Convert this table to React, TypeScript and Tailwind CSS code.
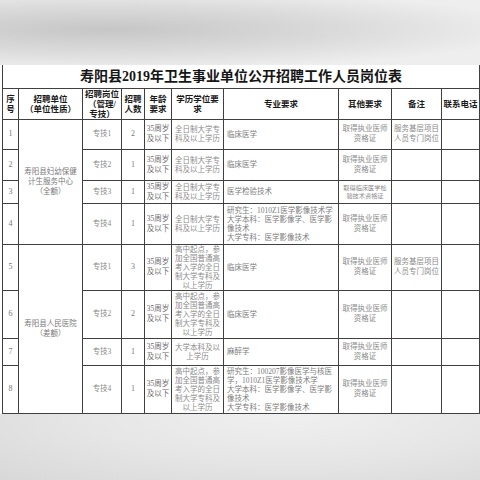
const FONT = "font-['Liberation_Serif','Noto_Sans_CJK_SC',serif]";

type Row = {
  no: string;
  post: string;
  num: string;
  edu: string[];
  major: string[];
  other: string[];
  otherSmall?: boolean;
  note: string[];
  h: string;
};

const EDU_LONG = ['高中起点，参', '加全国普通高', '考入学的全日', '制大学专科及', '以上学历'];
const EDU_SHORT = ['全日制大学专', '科及以上学历'];
const LICENSE = ['取得执业医师', '资格证'];
const NOTE = ['服务基层项目', '人员专门岗位'];

const ROWS: Row[] = [
  { no: '1', post: '专技1', num: '2', edu: EDU_SHORT, major: ['临床医学'], other: LICENSE, note: NOTE, h: 'h-[30px]' },
  { no: '2', post: '专技2', num: '1', edu: EDU_SHORT, major: ['临床医学'], other: LICENSE, note: [], h: 'h-[31px]' },
  { no: '3', post: '专技3', num: '1', edu: EDU_SHORT, major: ['医学检验技术'], other: ['取得临床医学检', '验技术资格证'], otherSmall: true, note: [], h: 'h-[23px]' },
  {
    no: '4', post: '专技4', num: '1', edu: EDU_SHORT,
    major: ['研究生：1010Z1医学影像技术学', '大学本科：医学影像学、医学影', '像技术', '大学专科：医学影像技术'],
    other: LICENSE, note: [], h: 'h-[41px]',
  },
  { no: '5', post: '专技1', num: '3', edu: EDU_LONG, major: ['临床医学'], other: LICENSE, note: NOTE, h: 'h-[46px]' },
  { no: '6', post: '专技2', num: '2', edu: EDU_LONG, major: ['临床医学'], other: LICENSE, note: [], h: 'h-[48px]' },
  { no: '7', post: '专技3', num: '1', edu: ['大学本科及以', '上学历'], major: ['麻醉学'], other: LICENSE, note: [], h: 'h-[27px]' },
  {
    no: '8', post: '专技4', num: '1', edu: EDU_LONG,
    major: ['研究生：100207影像医学与核医', '学，1010Z1医学影像技术学', '大学本科：医学影像学、医学影', '像技术', '大学专科：医学影像技术'],
    other: LICENSE, note: [], h: 'h-[48px]',
  },
];

const UNITS: Record<number, string[]> = {
  0: ['寿阳县妇幼保健', '计生服务中心', '（全额）'],
  4: ['寿阳县人民医院', '（差额）'],
};

function Lines({ items }: { items: string[] }) {
  return (
    <>
      {items.map((t, i) => (
        <div key={i} className="whitespace-nowrap">{t}</div>
      ))}
    </>
  );
}

const td = 'border border-[#404040] p-0 align-middle';
const th = 'border border-[#404040] p-0 align-middle text-center font-bold text-[8.5px] leading-[10px] text-[#1a1a1a]';

export default function App() {
  return (
    <div className={`w-[480px] h-[480px] overflow-hidden flex flex-col bg-[#e4e4e4] ${FONT}`}>
      {/* blurry photo background above the sheet */}
      <div className="h-[65px] shrink-0 bg-[radial-gradient(ellipse_at_22%_45%,#c6c6c6,#dbdbdb_45%,#eeeeee_80%)]" />

      <div className="bg-white pl-[2px] pr-[1px] shrink-0">
        <table className="table-fixed border-collapse w-[477px] text-[#888]">
          <colgroup>
            <col className="w-[16px]" />
            <col className="w-[64px]" />
            <col className="w-[39px]" />
            <col className="w-[23px]" />
            <col className="w-[27px]" />
            <col className="w-[52px]" />
            <col className="w-[115px]" />
            <col className="w-[53px]" />
            <col className="w-[50px]" />
            <col className="w-[38px]" />
          </colgroup>
          <tbody>
            <tr className="h-[23px]">
              <td colSpan={10} className="border-x border-b border-t-0 border-[#404040] p-0 pt-[2px] text-center text-[14px] font-bold leading-[18px] text-[#161616]">
                寿阳县2019年卫生事业单位公开招聘工作人员岗位表
              </td>
            </tr>
            <tr className="h-[31px]">
              <th className={th}>序<br />号</th>
              <th className={th}>招聘单位<br />（单位性质）</th>
              <th className={th}>招聘岗位<br />（管理/<br />专技）</th>
              <th className={th}>招聘<br />人数</th>
              <th className={th}>年龄<br />要求</th>
              <th className={th}>学历学位要<br />求</th>
              <th className={th}>专业要求</th>
              <th className={th}>其他要求</th>
              <th className={th}>备注</th>
              <th className={th}>联系电话</th>
            </tr>
            {ROWS.map((r, i) => (
              <tr key={i} className={r.h}>
                <td className={`${td} text-center text-[8px] text-[#777]`}>{r.no}</td>
                {UNITS[i] && (
                  <td rowSpan={4} className={`${td} text-center text-[7.5px] leading-[10px] text-[#7a7a7a]`}>
                    <Lines items={UNITS[i]} />
                  </td>
                )}
                <td className={`${td} text-center text-[7.5px] text-[#888]`}>{r.post}</td>
                <td className={`${td} text-center text-[8px] text-[#777]`}>{r.num}</td>
                <td className={`${td} text-center text-[7.5px] leading-[10px] text-[#6a6a6a]`}>
                  35周岁<br />及以下
                </td>
                <td className={`${td} text-center text-[7.5px] leading-[9px] text-[#8a8a8a]`}>
                  <Lines items={r.edu} />
                </td>
                <td className={`${td} pl-[3px] text-left text-[7.5px] leading-[9px] text-[#7c7c7c]`}>
                  <Lines items={r.major} />
                </td>
                <td
                  className={`${td} text-center text-[#8a8a8a] ${r.otherSmall ? 'text-[6.2px] leading-[8px]' : 'text-[7.5px] leading-[10px]'}`}
                >
                  <Lines items={r.other} />
                </td>
                <td className={`${td} text-center text-[7.5px] leading-[10px] text-[#8a8a8a]`}>
                  <Lines items={r.note} />
                </td>
                <td className={td} />
              </tr>
            ))}
          </tbody>
        </table>
      </div>

      {/* blurry photo background below the sheet */}
      <div className="flex-1 bg-[radial-gradient(ellipse_at_60%_0%,#f0f0f0,#e6e6e6_50%,#d8d8d8)]" />
    </div>
  );
}
